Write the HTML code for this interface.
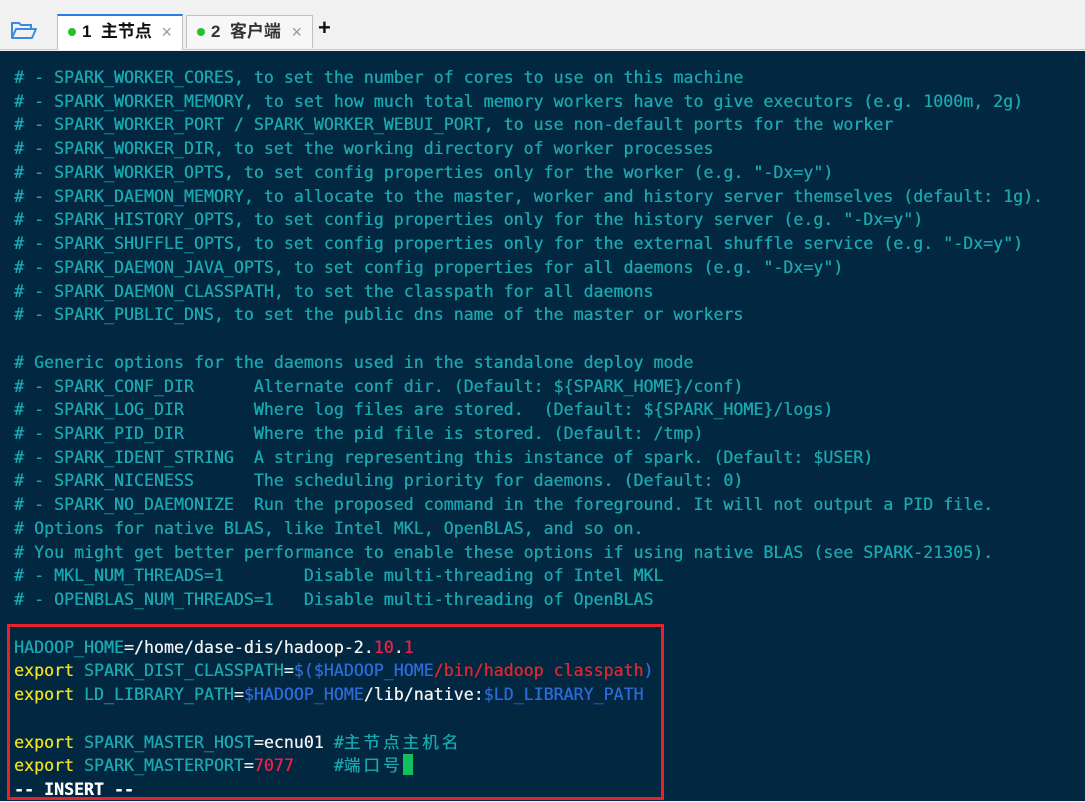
<!DOCTYPE html>
<html><head><meta charset="utf-8"><style>
*{margin:0;padding:0;box-sizing:border-box}
body{width:1085px;height:801px;overflow:hidden;background:#f1f1f1;font-family:"Liberation Sans","Noto Sans CJK SC",sans-serif;position:relative}
.bar{position:absolute;left:0;top:0;width:1085px;height:50px;background:#f1f1f1;border-bottom:1px solid #c8c8c8}
.tab{position:absolute;top:14px;height:33px;border:1px solid #c0c0c0;border-bottom:none;background:#f7f7f7;font-size:17px;font-weight:bold;color:#333;line-height:32px;padding-left:10px}
.tab.a{background:#fff;border-top:2px solid #2a7de1;height:36px;color:#111}
.dot{display:inline-block;width:8px;height:8px;border-radius:50%;background:#22c22a;margin-right:6px;vertical-align:1px}
.x{position:absolute;right:10px;top:0;color:#999;font-size:18px;font-weight:normal}
.term{position:absolute;left:0;top:51px;width:1085px;height:750px;background:#022841}
pre{position:absolute;left:14px;top:66px;font-family:"DejaVu Sans Mono","Noto Sans CJK SC",monospace;font-size:16.6px;line-height:23.73px;color:#19a8b0;white-space:pre;text-shadow:0.3px 0 0 currentColor}
.y{color:#f0e020}.w{color:#f2f2f2}.r{color:#ef1d48}.b{color:#2c6bd8}.rr{color:#e8232a}.wb{color:#fff;font-weight:bold}
.cj{letter-spacing:3px}
.box{position:absolute;left:7px;top:624px;width:657px;height:176px;border:3px solid #e8222a}
.cur{display:inline-block;width:10px;height:21px;background:#10c060;vertical-align:-4px}
</style></head><body>
<div class="bar">
<svg style="position:absolute;left:10px;top:20px" width="28" height="20" viewBox="0 0 28 20"><path d="M2 18V3h7l2 2h10v4" fill="none" stroke="#3a8be0" stroke-width="2"/><path d="M2 18l4-9h20l-4 9z" fill="none" stroke="#3a8be0" stroke-width="2" stroke-linejoin="round"/></svg>
<div class="tab a" style="left:57px;width:126px"><span class="dot"></span>1&nbsp; 主节点<span class="x">×</span></div>
<div class="tab" style="left:186px;width:127px;top:15px"><span class="dot"></span>2&nbsp; 客户端<span class="x">×</span></div>
<div style="position:absolute;left:318px;top:15px;font-size:22px;font-weight:bold;color:#111">+</div>
</div>
<div class="term"></div>
<pre># - SPARK_WORKER_CORES, to set the number of cores to use on this machine
# - SPARK_WORKER_MEMORY, to set how much total memory workers have to give executors (e.g. 1000m, 2g)
# - SPARK_WORKER_PORT / SPARK_WORKER_WEBUI_PORT, to use non-default ports for the worker
# - SPARK_WORKER_DIR, to set the working directory of worker processes
# - SPARK_WORKER_OPTS, to set config properties only for the worker (e.g. "-Dx=y")
# - SPARK_DAEMON_MEMORY, to allocate to the master, worker and history server themselves (default: 1g).
# - SPARK_HISTORY_OPTS, to set config properties only for the history server (e.g. "-Dx=y")
# - SPARK_SHUFFLE_OPTS, to set config properties only for the external shuffle service (e.g. "-Dx=y")
# - SPARK_DAEMON_JAVA_OPTS, to set config properties for all daemons (e.g. "-Dx=y")
# - SPARK_DAEMON_CLASSPATH, to set the classpath for all daemons
# - SPARK_PUBLIC_DNS, to set the public dns name of the master or workers

# Generic options for the daemons used in the standalone deploy mode
# - SPARK_CONF_DIR      Alternate conf dir. (Default: ${SPARK_HOME}/conf)
# - SPARK_LOG_DIR       Where log files are stored.  (Default: ${SPARK_HOME}/logs)
# - SPARK_PID_DIR       Where the pid file is stored. (Default: /tmp)
# - SPARK_IDENT_STRING  A string representing this instance of spark. (Default: $USER)
# - SPARK_NICENESS      The scheduling priority for daemons. (Default: 0)
# - SPARK_NO_DAEMONIZE  Run the proposed command in the foreground. It will not output a PID file.
# Options for native BLAS, like Intel MKL, OpenBLAS, and so on.
# You might get better performance to enable these options if using native BLAS (see SPARK-21305).
# - MKL_NUM_THREADS=1        Disable multi-threading of Intel MKL
# - OPENBLAS_NUM_THREADS=1   Disable multi-threading of OpenBLAS

HADOOP_HOME<span class="w">=/home/dase-dis/hadoop-2.</span><span class="r">10</span><span class="w">.</span><span class="r">1</span>
<span class="y">export</span> SPARK_DIST_CLASSPATH<span class="w">=</span><span class="b">$($HADOOP_HOME</span><span class="rr">/bin/hadoop classpath</span><span class="b">)</span>
<span class="y">export</span> LD_LIBRARY_PATH<span class="w">=</span><span class="b">$HADOOP_HOME</span><span class="w">/lib/native:</span><span class="b">$LD_LIBRARY_PATH</span>

<span class="y">export</span> SPARK_MASTER_HOST<span class="w">=ecnu01</span> #<span class="cj">主节点主机名</span>
<span class="y">export</span> SPARK_MASTERPORT<span class="w">=</span><span class="r">7077</span>    #<span class="cj">端口号</span><span class="cur"></span>
<span class="wb">-- INSERT --</span></pre>
<div class="box"></div>
</body></html>
